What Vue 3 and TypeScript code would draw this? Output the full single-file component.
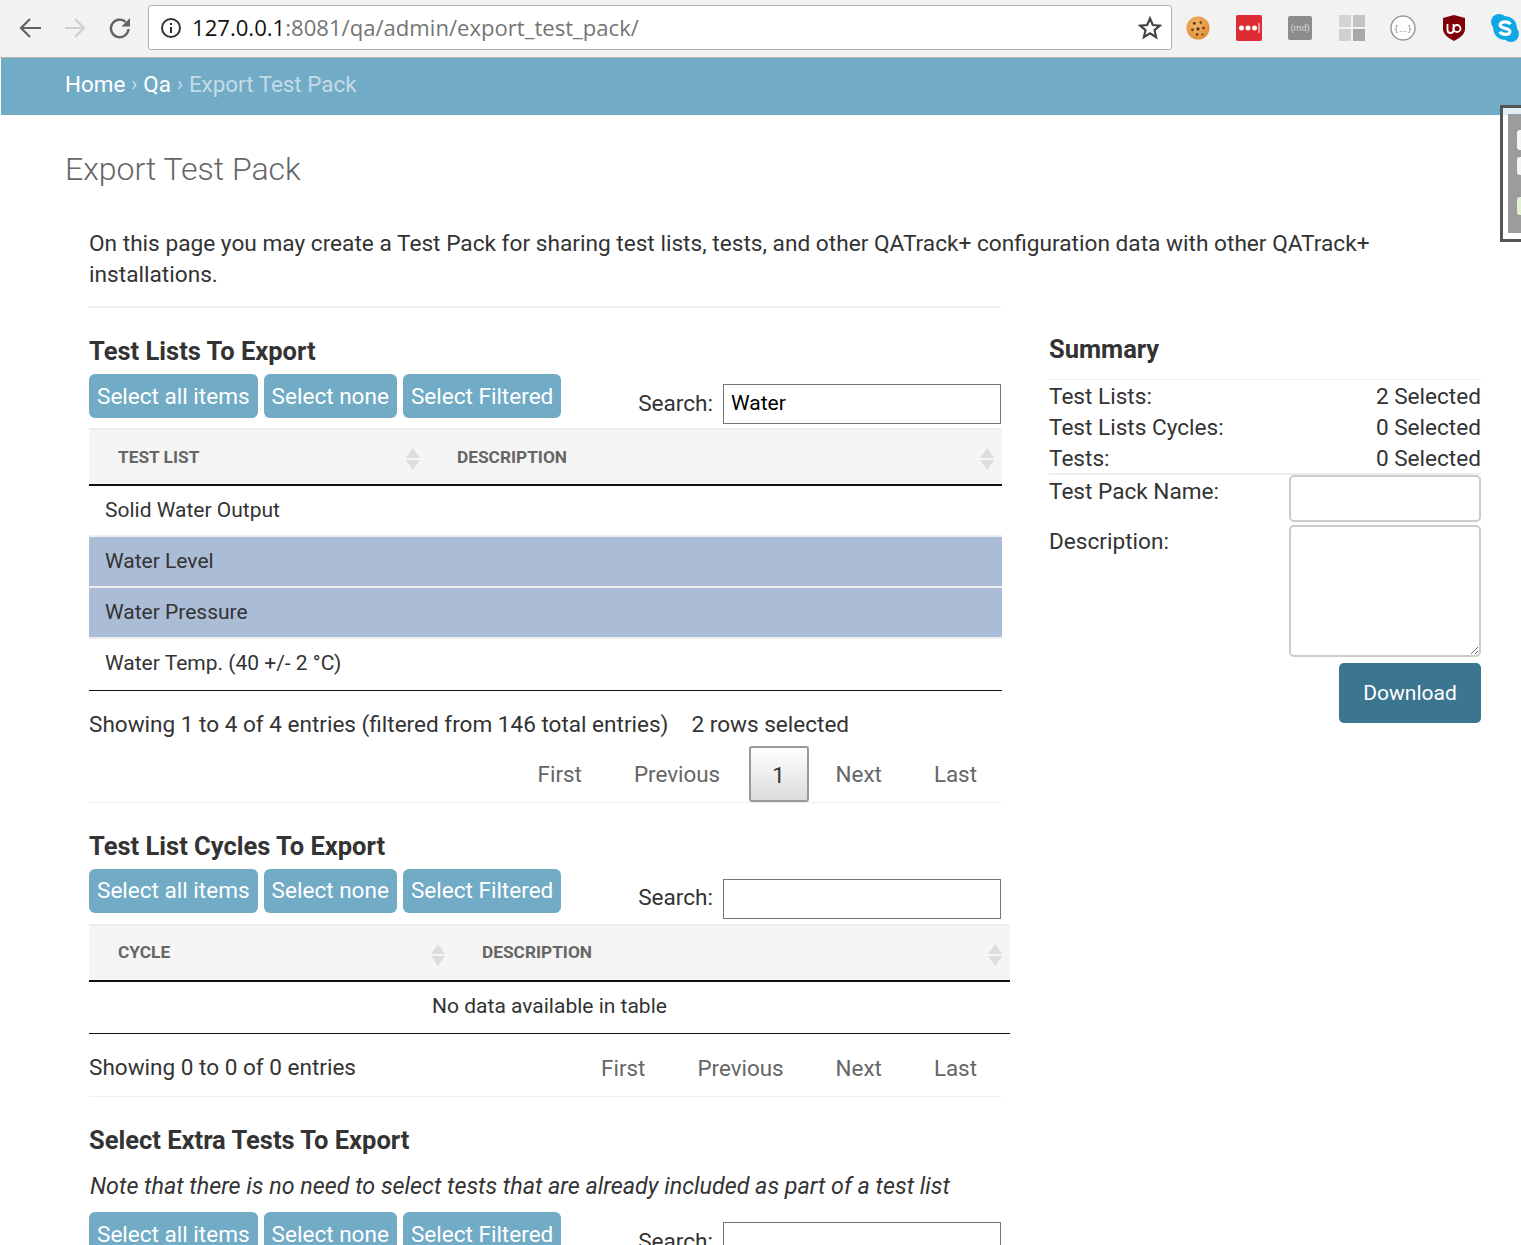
<script setup lang="ts">
interface Row {
  name: string
  selected?: boolean
}

const rows: Row[] = [
  { name: 'Solid Water Output' },
  { name: 'Water Level', selected: true },
  { name: 'Water Pressure', selected: true },
  { name: 'Water Temp. (40 +/- 2 °C)' }
]

const selectButtons = ['Select all items', 'Select none', 'Select Filtered']
const pageLinks = ['First', 'Previous']
const counts = [
  { label: 'Test Lists:', value: '2 Selected' },
  { label: 'Test Lists Cycles:', value: '0 Selected' },
  { label: 'Tests:', value: '0 Selected' }
]
const cookieChips = [
  [9, 8, 1.6], [16, 7, 1.3], [7, 15, 1.4], [13, 14, 1.7], [19, 13, 1.4], [12, 20, 1.3], [18, 20, 1]
]
</script>

<template>
  <div class="page">
    <!-- 브라우저 툴바 -->
    <div class="toolbar">
      <svg class="nav-icon first" width="24" height="24" viewBox="0 0 24 24" fill="none" stroke="#5f6368" stroke-width="2.2">
        <path d="M23 12H3M12 3l-9 9 9 9" />
      </svg>
      <svg class="nav-icon" width="24" height="24" viewBox="0 0 24 24" fill="none" stroke="#d0d0d0" stroke-width="2.2">
        <path d="M2 12h19M12 3l9 9-9 9" />
      </svg>
      <svg class="nav-icon" width="24" height="24" viewBox="0 0 24 24" fill="none" stroke="#5f6368" stroke-width="2.4">
        <path d="M20.500 13a8.800 8.800 0 1 1-3-7.200" />
        <path d="M22 2v8.500h-8.500z" fill="#5f6368" stroke="none" />
      </svg>
      <div class="url-box">
        <svg width="22" height="22" viewBox="0 0 22 22" fill="none" stroke="#333" stroke-width="2">
          <circle cx="11" cy="11" r="9" />
          <path d="M11 10v6M11 6v2" />
        </svg>
        <span class="url"><b>127.0.0.1</b>:8081/qa/admin/export_test_pack/</span>
        <svg class="star" width="24" height="24" viewBox="0 0 24 24" fill="none" stroke="#444" stroke-width="2.200">
          <path d="M12 2.500l2.800 6.500 7 .6-5.300 4.600 1.600 6.900-6.100-3.700-6.100 3.700 1.600-6.900-5.300-4.600 7-.6z" />
        </svg>
      </div>
      <div class="extensions">
        <svg width="24" height="24" viewBox="0 0 26 26">
          <defs>
            <radialGradient id="cookie-fill" cx="0.4" cy="0.35" r="0.75">
              <stop offset="0" stop-color="#f2b565" />
              <stop offset="1" stop-color="#dd8a32" />
            </radialGradient>
          </defs>
          <circle cx="13" cy="13" r="12.500" fill="url(#cookie-fill)" />
          <circle v-for="(chip, i) in cookieChips" :key="i" :cx="chip[0]" :cy="chip[1]" :r="chip[2]" fill="#55321a" />
        </svg>
        <svg width="26" height="26" viewBox="0 0 26 26">
          <rect width="26" height="26" rx="2" fill="#dd2c34" />
          <circle cx="5.500" cy="13" r="2.500" fill="#fff" />
          <circle cx="12" cy="13" r="2.500" fill="#fff" />
          <circle cx="18.500" cy="13" r="2.500" fill="#fff" />
          <path d="M23 8v10" stroke="#fff" />
        </svg>
        <svg width="24" height="24" viewBox="0 0 24 24">
          <rect width="24" height="24" rx="2" fill="#8c8c8c" />
          <text x="12" y="15" text-anchor="middle" font-family="Roboto, sans-serif" font-size="9" fill="#ddd">(md)</text>
        </svg>
        <svg width="26" height="26" viewBox="0 0 26 26">
          <rect width="12" height="12" fill="#d4d4d4" />
          <rect x="14" width="12" height="12" fill="#c4c4c4" />
          <rect y="14" width="12" height="12" fill="#d0d0d0" />
          <rect x="14" y="14" width="12" height="12" fill="#a8a8a8" />
        </svg>
        <svg width="26" height="26" viewBox="0 0 26 26">
          <circle cx="13" cy="13" r="12" fill="#fff" stroke="#9a9a9a" stroke-width="1.500" />
          <text x="13" y="16.500" text-anchor="middle" font-family="'DejaVu Sans', sans-serif" font-size="8.500" fill="#888">{...}</text>
        </svg>
        <svg width="24" height="26" viewBox="0 0 24 26">
          <path d="M12 0l11 3v11c0 5-5 9-11 12C6 23 1 19 1 14V3z" fill="#800008" />
          <path d="M5.500 9v6a3 3 0 0 0 6 0V9" fill="none" stroke="#fff" stroke-width="1.800" />
          <circle cx="15" cy="13.500" r="3.500" fill="none" stroke="#fff" stroke-width="1.800" />
        </svg>
        <svg width="28" height="28" viewBox="0 0 26 26">
          <circle cx="7.500" cy="7.500" r="7.500" fill="#0fa7e4" />
          <circle cx="18.500" cy="18.500" r="7.500" fill="#0fa7e4" />
          <circle cx="13" cy="13" r="11" fill="#0fa7e4" />
          <path d="M18 9.500c-1.500-3-8.500-3.200-9.500 .3-1 4.200 9.800 2.700 9 7-.8 3-7.500 2.800-9.200-.3" fill="none" stroke="#fff" stroke-width="3" />
        </svg>
      </div>
    </div>

    <div class="crumbs">
      <a>Home</a><span class="sep">›</span><a>Qa</a><span class="sep">›</span><span class="current">Export Test Pack</span>
    </div>

    <div class="floater">
      <div class="floater-inner"><i class="blob one" /><i class="blob two" /><i class="blob three" /></div>
    </div>

    <h1 class="page-title">Export Test Pack</h1>

    <div class="content">
      <p class="intro">
        On this page you may create a Test Pack for sharing test lists, tests, and other QATrack+ configuration data with other QATrack+ installations.
      </p>

      <div class="columns">
        <div class="main-col">
          <hr class="rule" />

          <!-- 테스트 리스트 -->
          <h2 class="section-title">Test Lists To Export</h2>
          <div class="controls">
            <div class="select-buttons">
              <button v-for="label in selectButtons" :key="label" class="select-btn">{{ label }}</button>
            </div>
            <label class="search"><span>Search:</span><input class="search-input" value="Water" /></label>
          </div>
          <table class="data-table">
            <thead>
              <tr>
                <th class="col-list">Test List<span class="sort" /></th>
                <th>Description<span class="sort" /></th>
              </tr>
            </thead>
            <tbody>
              <tr v-for="row in rows" :key="row.name" :class="{ selected: row.selected }">
                <td colspan="2">{{ row.name }}</td>
              </tr>
            </tbody>
          </table>
          <div class="info">Showing 1 to 4 of 4 entries (filtered from 146 total entries)<span class="rows-selected">2 rows selected</span></div>
          <div class="pager">
            <a v-for="link in pageLinks" :key="link" class="page-link">{{ link }}</a>
            <a class="page-current">1</a>
            <a class="page-link">Next</a>
            <a class="page-link">Last</a>
          </div>

          <!-- 테스트 리스트 사이클 -->
          <h2 class="section-title">Test List Cycles To Export</h2>
          <div class="controls tall">
            <div class="select-buttons">
              <button v-for="label in selectButtons" :key="label" class="select-btn">{{ label }}</button>
            </div>
            <label class="search"><span>Search:</span><input class="search-input" /></label>
          </div>
          <table class="data-table wide">
            <thead>
              <tr>
                <th class="col-cycle">Cycle<span class="sort" /></th>
                <th>Description<span class="sort" /></th>
              </tr>
            </thead>
            <tbody>
              <tr><td colspan="2" class="empty">No data available in table</td></tr>
            </tbody>
          </table>
          <div class="footer-row">
            <div class="info inline">Showing 0 to 0 of 0 entries</div>
            <div class="pager inline">
              <a v-for="link in pageLinks" :key="link" class="page-link">{{ link }}</a>
              <a class="page-link">Next</a>
              <a class="page-link">Last</a>
            </div>
          </div>

          <!-- 추가 테스트 -->
          <h2 class="section-title">Select Extra Tests To Export</h2>
          <p class="note">Note that there is no need to select tests that are already included as part of a test list</p>
          <div class="controls">
            <div class="select-buttons">
              <button v-for="label in selectButtons" :key="label" class="select-btn">{{ label }}</button>
            </div>
            <label class="search"><span>Search:</span><input class="search-input" /></label>
          </div>
        </div>

        <aside class="summary">
          <h2 class="summary-title">Summary</h2>
          <div class="counts">
            <div v-for="item in counts" :key="item.label" class="count-row">
              <span>{{ item.label }}</span><span>{{ item.value }}</span>
            </div>
          </div>
          <div class="form-row">
            <label>Test Pack Name:</label>
            <input class="field" />
          </div>
          <div class="form-row">
            <label>Description:</label>
            <textarea class="field area" />
          </div>
          <div class="download-row">
            <button class="download">Download</button>
          </div>
        </aside>
      </div>
    </div>
  </div>
</template>

<style scoped>
.page {
  position: relative;
  width: 1521px;
  height: 1245px;
  overflow: hidden;
  background: #fff;
  color: #333;
  font-family: Roboto, "Liberation Sans", sans-serif;
  font-size: 22.6px;
  line-height: 31px;
}

.toolbar {
  display: flex;
  align-items: center;
  height: 58px;
  box-sizing: border-box;
  padding: 0 0 2px 18px;
  background: #f2f2f2;
  border-bottom: 1px solid #b5b5b5;
}

.nav-icon {
  margin-right: 21px;
  flex: none;
}

.url-box {
  display: flex;
  align-items: center;
  width: 1024px;
  height: 45px;
  box-sizing: border-box;
  padding: 0 9px 0 11px;
  margin-left: -5px;
  background: #fff;
  border: 1px solid #b0b0b0;
  border-radius: 3px;
  flex: none;
}

.url {
  flex: 1;
  margin-left: 10px;
  font-family: "Open Sans", sans-serif;
  font-size: 22.100px;
  color: #757575;
}

.url b {
  font-weight: 400;
  color: #111;
}

.extensions {
  display: grid;
  grid-template-columns: repeat(7, 51.200px);
  justify-items: center;
  align-items: center;
  margin-left: 0.5px;
  flex: none;
}

.crumbs {
  display: flex;
  align-items: center;
  height: 57px;
  box-sizing: border-box;
  margin-left: 1px;
  padding: 0 0 4px 64px;
  background: #72abc6;
  color: #fff;
  font-size: 22.400px;
}

.sep {
  margin: 0 6px;
  color: #c5dbe6;
  font-size: 20px;
}

.current {
  color: #c5dbe6;
}

.floater {
  position: absolute;
  top: 105px;
  left: 1500px;
  width: 40px;
  height: 137px;
  box-sizing: border-box;
  padding: 6px 0 6px 5px;
  border: 3px solid #555;
  background: rgba(255, 255, 255, 0.8);
}

.floater-inner {
  position: relative;
  height: 119px;
  background: #9c9c9c;
}

.blob {
  position: absolute;
  left: 9px;
  width: 12px;
  background: #f4f4f4;
  border-radius: 3px;
}

.blob.one { top: 16px; height: 20px; }
.blob.two { top: 43px; height: 18px; }
.blob.three { top: 83px; height: 18px; background: #e0f0d0; }

.page-title {
  margin: 36px 0 0 65px;
  height: 36px;
  font-size: 32px;
  line-height: 36px;
  font-weight: 300;
  color: #666;
}

.content {
  padding-left: 89px;
  width: 1392px;
}

.intro {
  margin: 41px 0 0;
  width: 1300px;
  font-size: 22.670px;
}

.columns {
  display: flex;
  gap: 48px;
  margin-top: 16px;
}

.main-col {
  width: 912px;
  flex: none;
}

.rule {
  margin: 0;
  border: 0;
  border-top: 2px solid #eee;
}

.section-title {
  margin: 28px 0 8px;
  font-size: 25.500px;
  line-height: 30px;
  font-weight: 700;
  color: #333;
}

.controls {
  display: flex;
  justify-content: space-between;
  height: 54px;
}

.controls.tall { height: 55px; }

.select-buttons {
  display: flex;
  gap: 6px;
  height: 44px;
}

.select-btn {
  padding: 0 8px;
  border: 0;
  border-radius: 6px;
  background: #72abc6;
  color: #fff;
  font: inherit;
  font-size: 22.550px;
}

.search {
  display: flex;
  align-items: center;
  gap: 10px;
  height: 40px;
  margin-top: 10px;
}

.search span {
  padding-bottom: 2px;
}

.search-input {
  width: 278px;
  height: 40px;
  box-sizing: border-box;
  padding: 0 7px 2px;
  border: 1px solid #767676;
  background: #fff;
  color: #000;
  font: inherit;
  font-size: 21px;
}

.data-table {
  width: 913px;
  border-collapse: collapse;
  border-bottom: 1px solid #111;
}

.data-table.wide { width: 921px; }

th {
  position: relative;
  height: 56px;
  box-sizing: border-box;
  padding: 0 28px;
  background: #f5f5f5;
  border-top: 2px solid #eee;
  border-bottom: 2px solid #111;
  color: #666;
  font-size: 17.300px;
  font-weight: 700;
  text-align: left;
  text-transform: uppercase;
}

th:first-child { padding-left: 29px; }

.col-list { width: 340px; }
.col-cycle { width: 365px; }

.sort {
  position: absolute;
  top: 18px;
  right: 9px;
  width: 14px;
  height: 22px;
}

th:last-child .sort { right: 8px; }

.sort::before,
.sort::after {
  content: "";
  position: absolute;
  left: 0;
  border-left: 7px solid transparent;
  border-right: 7px solid transparent;
}

.sort::before {
  top: 0;
  border-bottom: 10px solid #ddd;
}

.sort::after {
  bottom: 0;
  border-top: 10px solid #ddd;
}

td {
  height: 51px;
  box-sizing: border-box;
  padding: 0 16px;
  border-top: 2px solid #eee;
  font-size: 21px;
}

tbody tr:first-child td { border-top: 0; }
tbody tr:last-child td { height: 52px; padding-bottom: 1px; }

.selected td { background: #abbcd6; }

.data-table tbody td.empty {
  height: 53px;
  padding-bottom: 2px;
  text-align: center;
}

.info {
  margin-top: 18px;
  font-size: 22.550px;
}

.rows-selected { margin-left: 23px; }

.pager {
  display: flex;
  justify-content: flex-end;
  align-items: center;
  height: 56px;
  margin-top: 6px;
  padding-right: 24px;
  border-bottom: 1px solid #eee;
  color: #666;
  font-size: 22.400px;
}

.page-link {
  margin-left: 52px;
  padding-top: 2px;
}

.page-current {
  width: 60px;
  height: 56px;
  box-sizing: border-box;
  margin-left: 28.500px;
  margin-right: -25px;
  border: 2px solid #999;
  border-radius: 3px;
  background: linear-gradient(#fff, #dcdcdc);
  color: #333;
  line-height: 54px;
  text-align: center;
}

.footer-row {
  display: flex;
  justify-content: space-between;
  height: 62px;
  border-bottom: 1px solid #eee;
}

.info.inline { margin-top: 18px; }
.pager.inline { border: 0; margin: 5px 0 0; height: 56px; }

.note {
  margin: 16px 0 10px 1px;
  font-size: 23.300px;
  font-style: italic;
}

.summary {
  width: 432px;
  flex: none;
}

.summary-title {
  margin: 28px 0 15px;
  font-size: 25.500px;
  line-height: 30px;
  font-weight: 700;
}

.counts {
  height: 96px;
  box-sizing: border-box;
  padding-top: 1px;
  border-top: 1px solid #eee;
  border-bottom: 2px solid #eee;
}

.count-row {
  display: flex;
  justify-content: space-between;
}

.form-row {
  display: flex;
  justify-content: space-between;
  margin-bottom: 3px;
}

.form-row label {
  padding-top: 1px;
}

.field {
  width: 192px;
  height: 47px;
  box-sizing: border-box;
  border: 2px solid #ccc;
  border-radius: 5px;
  background: #fff;
}

.area { height: 132px; }

.download-row {
  display: flex;
  justify-content: flex-end;
  margin-top: 6px;
}

.download {
  width: 142px;
  height: 60px;
  border: 0;
  border-radius: 5px;
  background: #3c758f;
  color: #fff;
  font: inherit;
  font-size: 21px;
}
</style>

<style>
html,
body {
  margin: 0;
  overflow: hidden;
}
</style>
